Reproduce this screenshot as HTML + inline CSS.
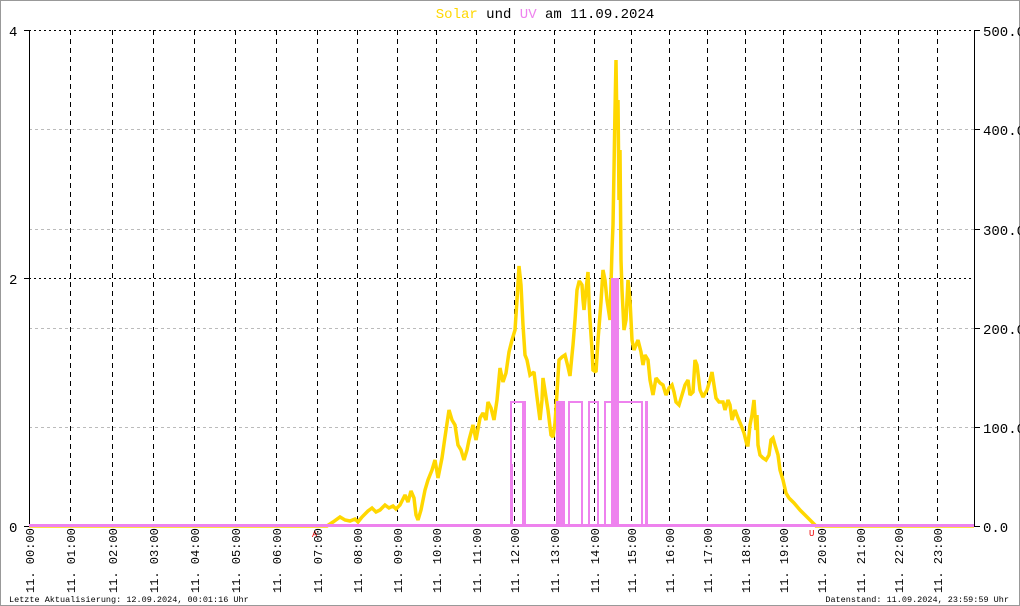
<!DOCTYPE html>
<html><head><meta charset="utf-8"><style>
html,body{margin:0;padding:0;background:#fff}
svg{display:block}
text{font-family:"Liberation Mono","DejaVu Sans Mono",monospace}
</style></head><body>
<svg width="1020" height="606" viewBox="0 0 1020 606" xmlns="http://www.w3.org/2000/svg">
<rect x="0.5" y="0.5" width="1019" height="605" fill="#fff" stroke="#999"/>
<text x="545" y="18" font-size="14" text-anchor="middle"><tspan fill="#ffd700">Solar</tspan> und <tspan fill="#ee82ee">UV</tspan> am 11.09.2024</text>
<g stroke="#bbb" stroke-dasharray="3,3" stroke-width="1">
<line x1="29" x2="974" y1="129.5" y2="129.5"/><line x1="29" x2="974" y1="229.5" y2="229.5"/>
<line x1="29" x2="974" y1="328.5" y2="328.5"/><line x1="29" x2="974" y1="427.5" y2="427.5"/>
</g>
<g stroke="#000" stroke-dasharray="2,3" stroke-width="1">
<line x1="29" x2="974" y1="30.5" y2="30.5"/><line x1="29" x2="974" y1="278.5" y2="278.5"/>
</g>
<g stroke="#000" stroke-dasharray="5,4" stroke-width="1">
<line x1="70.5" x2="70.5" y1="30" y2="526"/><line x1="112.5" x2="112.5" y1="30" y2="526"/>
<line x1="153.5" x2="153.5" y1="30" y2="526"/><line x1="194.5" x2="194.5" y1="30" y2="526"/>
<line x1="235.5" x2="235.5" y1="30" y2="526"/><line x1="276.5" x2="276.5" y1="30" y2="526"/>
<line x1="317.5" x2="317.5" y1="30" y2="526"/><line x1="357.5" x2="357.5" y1="30" y2="526"/>
<line x1="397.5" x2="397.5" y1="30" y2="526"/><line x1="436.5" x2="436.5" y1="30" y2="526"/>
<line x1="476.5" x2="476.5" y1="30" y2="526"/><line x1="514.5" x2="514.5" y1="30" y2="526"/>
<line x1="554.5" x2="554.5" y1="30" y2="526"/><line x1="594.5" x2="594.5" y1="30" y2="526"/>
<line x1="631.5" x2="631.5" y1="30" y2="526"/><line x1="669.5" x2="669.5" y1="30" y2="526"/>
<line x1="707.5" x2="707.5" y1="30" y2="526"/><line x1="745.5" x2="745.5" y1="30" y2="526"/>
<line x1="783.5" x2="783.5" y1="30" y2="526"/><line x1="821.5" x2="821.5" y1="30" y2="526"/>
<line x1="860.5" x2="860.5" y1="30" y2="526"/><line x1="898.5" x2="898.5" y1="30" y2="526"/>
<line x1="937.5" x2="937.5" y1="30" y2="526"/>
</g>
<line x1="29.5" x2="29.5" y1="30" y2="527" stroke="#000"/>
<line x1="974.5" x2="974.5" y1="30" y2="527" stroke="#000"/>
<g stroke="#000"><line x1="24" x2="29" y1="30.5" y2="30.5"/><line x1="24" x2="29" y1="278.5" y2="278.5"/><line x1="24" x2="29" y1="526.5" y2="526.5"/>
<line x1="975" x2="980" y1="30.5" y2="30.5"/><line x1="975" x2="980" y1="129.5" y2="129.5"/><line x1="975" x2="980" y1="229.5" y2="229.5"/><line x1="975" x2="980" y1="328.5" y2="328.5"/><line x1="975" x2="980" y1="427.5" y2="427.5"/><line x1="975" x2="980" y1="526.5" y2="526.5"/></g>
<g font-size="14" fill="#000">
<text x="9" y="36">4</text><text x="9" y="284">2</text><text x="9" y="532">0</text>
<text x="983" y="36">500.0</text><text x="983" y="135">400.0</text><text x="983" y="235">300.0</text>
<text x="983" y="334">200.0</text><text x="983" y="433">100.0</text><text x="983" y="532">0.0</text>
</g>
<polyline fill="none" stroke="#ffd700" stroke-width="3.5" stroke-linejoin="miter" stroke-miterlimit="2" points="29,526 327,526 333,522 340,517 345,520 350,521 355,519 358,522 362,517 368,511 372,508 376,512 380,510 385,505 389,508 393,506 396,509 400,505 405,495 408,502 411,491 414,498 416,515 418,520 421,510 425,490 428,480 432,470 435,460 438,478 442,458 445,437 449,410 452,420 455,425 458,445 461,450 464,460 467,450 469,440 473,425 476,440 480,418 483,413 486,420 488,402 491,408 494,420 497,400 500,368 503,382 506,373 509,352 512,340 515,330 517,300 519,266 521,285 523,325 525,355 527,360 530,375 534,372 537,397 540,420 542,400 543,378 548,410 551,435 553,437 555,423 557,393 559,360 562,357 565,355 568,367 570,376 572,355 573,345 575,320 577,290 579,282 580,282 582,285 583,300 584,310 586,290 588,272 589,300 590,320 592,350 593,370 596,372 598,340 601,302 603,270 605,280 607,300 610,320 612,250 613,225 614,170 615,110 616,60 617,130 618,100 619,200 620,150 621,260 622,290 624,330 626,320 628,280 630,300 632,340 634,350 636,345 638,340 641,352 643,365 645,355 648,360 650,380 653,395 656,378 660,383 663,385 666,395 669,388 672,385 674,392 676,402 679,405 682,395 685,385 688,380 690,395 693,392 695,360 697,365 700,390 703,397 707,390 710,380 712,372 714,385 716,398 719,402 723,402 725,410 728,400 730,405 732,420 735,410 738,418 741,425 744,433 747,445 748,445 750,425 752,415 754,400 756,430 757,415 758,445 760,455 763,458 766,460 769,455 771,440 773,438 775,445 778,455 780,470 783,480 786,493 789,498 794,503 800,510 806,516 812,522 816,526 974,526"/>
<g fill="#ee82ee">
<rect x="510" y="464" width="3" height="62"/><rect x="522" y="464" width="3" height="62"/>
<rect x="556" y="401" width="4" height="125"/><rect x="611" y="278" width="8" height="248"/>
<rect x="597" y="464" width="2" height="62"/><rect x="645" y="464" width="3" height="62"/>
<rect x="29" y="524" width="945" height="3"/>
</g>
<path fill="none" stroke="#ee82ee" stroke-width="2" d="M29 526 H511 V402 H523 V526 H524 V402 H525 V526 H557 V402 H561 V526 H562 V402 H564 V526 H569 V402 H582 V526 H589 V402 H598 V526 H605 V402 H642 V526 H646 V402 H647 V526 H974"/>
<text x="312" y="537" font-size="9" fill="#e00">A</text>
<text x="809" y="536" font-size="9" fill="#e00">U</text>
<g font-size="12" fill="#000">
<text transform="translate(34,593) rotate(-90)">11. 00:00</text>
<text transform="translate(75,593) rotate(-90)">11. 01:00</text>
<text transform="translate(117,593) rotate(-90)">11. 02:00</text>
<text transform="translate(158,593) rotate(-90)">11. 03:00</text>
<text transform="translate(199,593) rotate(-90)">11. 04:00</text>
<text transform="translate(240,593) rotate(-90)">11. 05:00</text>
<text transform="translate(281,593) rotate(-90)">11. 06:00</text>
<text transform="translate(322,593) rotate(-90)">11. 07:00</text>
<text transform="translate(362,593) rotate(-90)">11. 08:00</text>
<text transform="translate(402,593) rotate(-90)">11. 09:00</text>
<text transform="translate(441,593) rotate(-90)">11. 10:00</text>
<text transform="translate(481,593) rotate(-90)">11. 11:00</text>
<text transform="translate(519,593) rotate(-90)">11. 12:00</text>
<text transform="translate(559,593) rotate(-90)">11. 13:00</text>
<text transform="translate(599,593) rotate(-90)">11. 14:00</text>
<text transform="translate(636,593) rotate(-90)">11. 15:00</text>
<text transform="translate(674,593) rotate(-90)">11. 16:00</text>
<text transform="translate(712,593) rotate(-90)">11. 17:00</text>
<text transform="translate(750,593) rotate(-90)">11. 18:00</text>
<text transform="translate(788,593) rotate(-90)">11. 19:00</text>
<text transform="translate(826,593) rotate(-90)">11. 20:00</text>
<text transform="translate(865,593) rotate(-90)">11. 21:00</text>
<text transform="translate(903,593) rotate(-90)">11. 22:00</text>
<text transform="translate(942,593) rotate(-90)">11. 23:00</text>
</g>
<text x="9" y="602" font-size="8.5" fill="#000">Letzte Aktualisierung: 12.09.2024, 00:01:16 Uhr</text>
<text x="1009" y="602" font-size="8.5" fill="#000" text-anchor="end">Datenstand: 11.09.2024, 23:59:59 Uhr</text>
</svg>
</body></html>
